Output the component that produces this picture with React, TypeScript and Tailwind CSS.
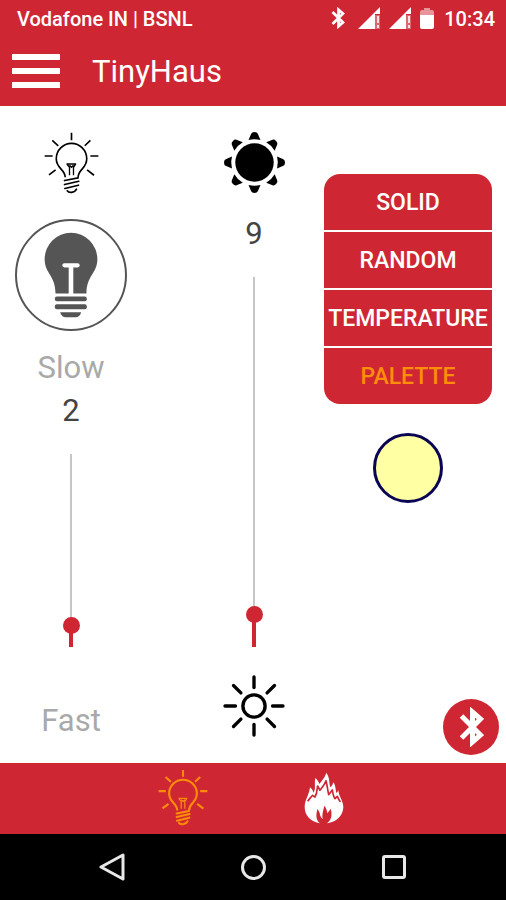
import { useState } from "react";

type IconProps = { className?: string };

const EIGHTHS = [0, 45, 90, 135, 180, 225, 270, 315];

function GlowingBulb({ className, strokeWidth = 5 }: IconProps & { strokeWidth?: number }) {
  return (
    <svg viewBox="130 36 166 186" className={className} fill="none" stroke="currentColor" strokeWidth={strokeWidth} aria-hidden="true">
      <path d="M213 38V60M155 61L173 77M270 61L253 77M132 108H156M270 108H294M145 165L165 150M260 150L281 166" />
      <path d="M194 172C194 148 167 146 167 116A46 46 0 0 1 259 116C259 146 233 148 233 172" />
      <path d="M198 132H227M199 132L207 142V166M226 132L219 142V166M207 136L213 142L219 136" strokeWidth="4" />
      <path d="M192 182L233 174M192 194L235 184M193 206L234 196M200 213C205 220 222 220 228 208" strokeLinecap="round" />
    </svg>
  );
}

function SolidBulb({ className }: IconProps) {
  return (
    <svg viewBox="132 336 164 260" className={className} fill="currentColor" aria-hidden="true">
      <path d="M167 522C167 466 134 462 134 418A80 80 0 0 1 294 418C294 462 261 466 261 522H221V443H234A6 6 0 0 0 234 430H194A6 6 0 0 0 194 443H207V522Z" />
      <rect x="165" y="531" width="97" height="15" rx="6" />
      <rect x="165" y="555" width="97" height="15" rx="6" />
      <path d="M181 579H245C242 590 236 594 228 594H198C190 594 184 590 181 579Z" />
    </svg>
  );
}

function BrightSun({ className }: IconProps) {
  return (
    <svg viewBox="-92 -92 184 184" className={className} fill="currentColor" aria-hidden="true">
      <circle r="58" />
      {EIGHTHS.map((angle) => (
        <path key={angle} transform={`rotate(${angle})`} d="M-18 -68L-10 -87Q-8 -92 0 -92Q8 -92 10 -87L18 -68Q0 -73 -18 -68Z" />
      ))}
    </svg>
  );
}

function DimSun({ className }: IconProps) {
  return (
    <svg viewBox="-92 -92 184 184" className={className} fill="none" stroke="currentColor" strokeWidth="10" strokeLinecap="round" aria-hidden="true">
      <circle r="33" />
      {EIGHTHS.map((angle) => (
        <path key={angle} transform={`rotate(${angle})`} d="M0 -55V-86" />
      ))}
    </svg>
  );
}

function Flame({ className }: IconProps) {
  return (
    <svg viewBox="492 50 120 156" className={className} aria-hidden="true">
      <path
        fill="currentColor"
        d="M540 204C512 199 494 181 494 155C494 133 507 121 510 96C516 101 519 106 520 112C529 101 522 85 526 68C532 73 536 79 538 86C544 77 553 70 559 52C569 65 567 81 571 96C576 92 578 88 580 81C588 92 586 103 589 113C592 111 594 108 595 104C596 123 610 136 610 156C609 182 589 200 561 204C573 194 578 181 572 160C568 166 565 170 562 174C561 165 558 157 553 151C551 163 545 175 548 192C542 186 540 180 539 173L533 160C526 180 529 195 540 204Z"
      />
      <path
        className="stroke-[#ce2733]"
        fill="none"
        strokeWidth="5"
        strokeLinejoin="round"
        d="M503 138C509 129 514 125 517 120L525 125C533 112 530 100 533 92L540 105C547 96 554 88 558 76C562 91 563 105 566 118L577 104C579 116 580 124 585 130L592 123C594 130 598 134 601 140"
      />
    </svg>
  );
}

function BluetoothRune({ className }: IconProps) {
  return (
    <svg viewBox="0 0 24 40" className={className} fill="none" stroke="currentColor" strokeWidth="5" strokeLinejoin="miter" aria-hidden="true">
      <path d="M2 9L21 28L13 35V5L21 12L2 31" />
    </svg>
  );
}

function SignalIcon({ className }: IconProps) {
  return (
    <svg viewBox="0 0 22 22" className={className} fill="currentColor" aria-hidden="true">
      <path d="M0 22L22 0V7H17V22Z" />
      <path d="M17 8H22V22H17Z" opacity="0.3" />
      <path d="M19 9H21V16H19ZM19 18H21V21H19Z" opacity="0.8" />
    </svg>
  );
}

function BatteryIcon({ className }: IconProps) {
  return (
    <svg viewBox="0 0 14 21" className={className} fill="currentColor" aria-hidden="true">
      <path d="M0 7V4Q0 2 2 2H4V0H10V2H12Q14 2 14 4V7Z" opacity="0.5" />
      <path d="M0 7H14V19Q14 21 12 21H2Q0 21 0 19Z" />
    </svg>
  );
}

const THUMB = 17;

function VerticalSlider({ label, max, value, onChange }: { label: string; max: number; value: number; onChange: (value: number) => void }) {
  const ratio = value / max;
  return (
    <input
      type="range"
      aria-label={label}
      min={0}
      max={max}
      value={value}
      onChange={(event) => onChange(Number(event.target.value))}
      className="min-h-40 w-[18px] flex-1 cursor-pointer appearance-none bg-[linear-gradient(#ce2733,#ce2733),linear-gradient(#c6c6c6,#c6c6c6)] bg-bottom bg-no-repeat outline-none [direction:rtl] [writing-mode:vertical-lr] [&::-webkit-slider-thumb]:size-[17px] [&::-webkit-slider-thumb]:appearance-none [&::-webkit-slider-thumb]:rounded-full [&::-webkit-slider-thumb]:bg-[#ce2733]"
      style={{ backgroundSize: `4px calc(${ratio * 100}% + ${THUMB / 2}px), 2px 100%` }}
    />
  );
}

const MODES = ["SOLID", "RANDOM", "TEMPERATURE", "PALETTE"];

export default function App() {
  const [speed, setSpeed] = useState(2);
  const [brightness, setBrightness] = useState(9);
  const [mode, setMode] = useState("PALETTE");

  return (
    <div className="flex min-h-screen flex-col bg-white font-[Roboto,sans-serif]">
      <header className="bg-[#ce2733] text-white">
        <div className="flex h-[38px] items-center justify-between pr-[11px] pl-[17px] text-[20px] leading-6 font-medium">
          <span>Vodafone IN | BSNL</span>
          <div className="flex items-center gap-[10px]">
            <div className="flex items-center gap-[9px] pb-[2px]">
              <BluetoothRune className="mr-1 h-[22px] w-[14px]" />
              <SignalIcon className="size-[22px]" />
              <SignalIcon className="size-[22px]" />
              <BatteryIcon className="h-[21px] w-[14px]" />
            </div>
            <span>10:34</span>
          </div>
        </div>
        <div className="flex h-[68px] items-center gap-8 px-3">
          <button type="button" aria-label="Open menu" className="flex w-12 flex-col gap-2 pb-[2px]">
            <span className="h-[6px] bg-white" />
            <span className="h-[6px] bg-white" />
            <span className="h-[6px] bg-white" />
          </button>
          <h1 className="text-[31px] leading-9">TinyHaus</h1>
        </div>
      </header>

      <main className="flex flex-1">
        <section className="flex w-[142px] flex-col items-center pt-[26px] pb-6">
          <GlowingBulb className="h-[62px] w-[55px] text-black" />
          <button type="button" aria-label="Toggle light" className="mt-[25px] flex size-28 items-center justify-center rounded-full border-2 border-[#555] text-[#555]">
            <SolidBulb className="h-[86px] w-[54px]" />
          </button>
          <span className="mt-[19px] text-[31px] leading-9 text-[#a9a9a9]">Slow</span>
          <output className="mt-[7px] mb-[25px] text-[31px] leading-9 text-[#444]">{speed}</output>
          <VerticalSlider label="Speed" max={28} value={speed} onChange={setSpeed} />
          <span className="mt-[56px] text-[31px] leading-9 text-[#a9a9a9]">Fast</span>
        </section>

        <section className="flex flex-1 flex-col items-center pt-[26px] pb-[26px] pl-[42px]">
          <BrightSun className="size-[61px] text-black" />
          <output className="mt-[23px] mb-[25px] text-[31px] leading-9 text-[#444]">{brightness}</output>
          <VerticalSlider label="Brightness" max={135} value={brightness} onChange={setBrightness} />
          <DimSun className="mt-[28px] size-[62px] text-black" />
        </section>

        <section className="flex w-[182px] flex-col pt-[68px] pr-[7px] pb-2">
          <div className="mr-[7px] flex flex-col gap-[2px] overflow-hidden rounded-[16px]">
            {MODES.map((name) => (
              <button
                key={name}
                type="button"
                aria-pressed={name === mode}
                onClick={() => setMode(name)}
                className={`h-14 bg-[#ce2733] pt-[2px] text-[23px] leading-7 font-medium ${name === mode ? "text-[#ff8c0a]" : "text-white"}`}
              >
                {name}
              </button>
            ))}
          </div>
          <div className="mt-[29px] mr-[7px] flex justify-center">
            <button type="button" aria-label="Selected colour" className="size-[70px] rounded-full border-[3px] border-[#0a0553] bg-[#ffffa3]" />
          </div>
          <button type="button" aria-label="Bluetooth" className="mt-auto flex size-14 items-center justify-center self-end rounded-full bg-[#ce2733] text-white">
            <BluetoothRune className="h-[40px] w-[25px]" />
          </button>
        </section>
      </main>

      <nav className="flex h-[71px] items-center justify-center gap-24 bg-[#ce2733] pr-1 pb-[2px]">
        <button type="button" aria-label="Light" className="text-[#ff8c0a]">
          <GlowingBulb className="h-[57px] w-[50px]" strokeWidth={7} />
        </button>
        <button type="button" aria-label="Fire" className="text-white">
          <Flame className="h-[52px] w-10" />
        </button>
      </nav>

      <footer className="flex h-[66px] items-center justify-center gap-[116px] bg-black pr-[2px] text-[#e8e8e8]">
        <button type="button" aria-label="Back">
          <svg viewBox="0 0 26 28" className="h-7 w-[26px]" fill="none" stroke="currentColor" strokeWidth="3" strokeLinejoin="round" aria-hidden="true">
            <path d="M2 14L24 2V26Z" />
          </svg>
        </button>
        <button type="button" aria-label="Home" className="size-[25px] rounded-full border-3 border-current" />
        <button type="button" aria-label="Recent apps" className="size-6 rounded-[3px] border-3 border-current" />
      </footer>
    </div>
  );
}
